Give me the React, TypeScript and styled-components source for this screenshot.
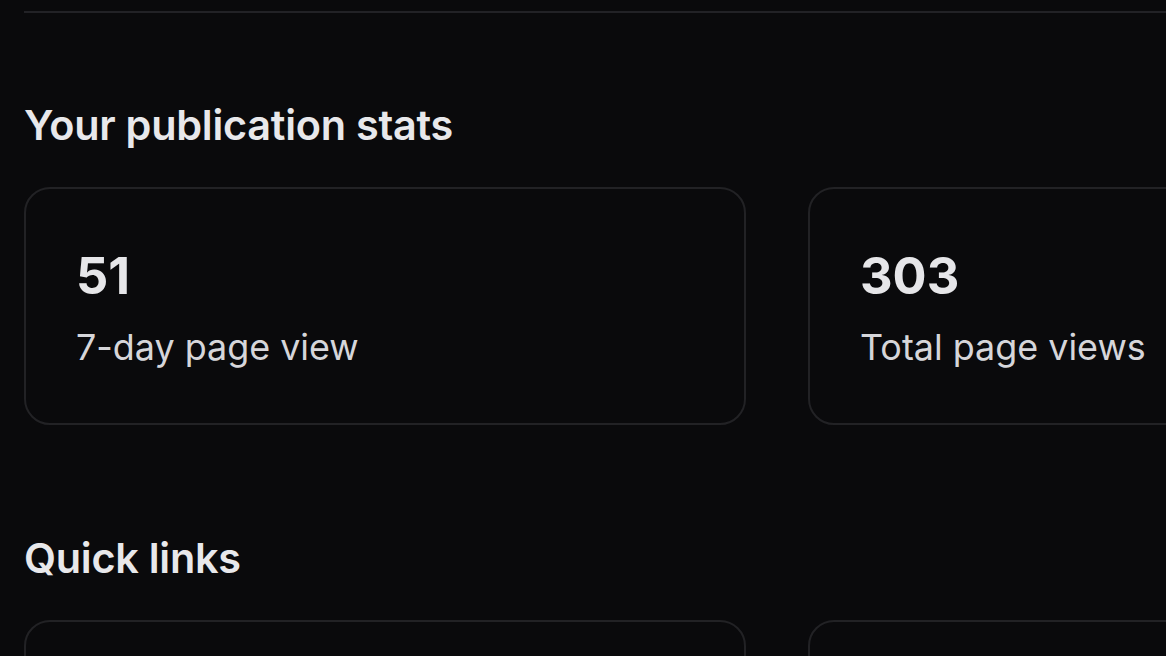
import styled, { createGlobalStyle } from 'styled-components'

const Global = createGlobalStyle`
  html, body {
    margin: 0;
    padding: 0;
    background: #0a0a0c;
  }
  body {
    font-family: Inter, "Noto Sans", sans-serif;
    color: #e7e7ea;
    overflow: hidden;
  }
`

const stats = [
  { value: '51', label: '7-day page view' },
  { value: '303', label: 'Total page views' },
]

export default function App() {
  return (
    <>
      <Global />
      <Page>
        <Divider />
        <Section>
          <Heading>Your publication stats</Heading>
          <CardGrid>
            {stats.map((s) => (
              <StatCard key={s.label}>
                <Value>{s.value}</Value>
                <Label>{s.label}</Label>
              </StatCard>
            ))}
          </CardGrid>
        </Section>
        <Section>
          <Heading>Quick links</Heading>
          <CardGrid>
            <LinkCard />
            <LinkCard />
          </CardGrid>
        </Section>
      </Page>
    </>
  )
}

const Page = styled.main`
  padding: 11px 0 0 24px;
  width: 1600px;
  height: 656px;
  box-sizing: border-box;
`

const Divider = styled.hr`
  margin: 0 0 88px;
  border: none;
  height: 2px;
  background: #222226;
`

const Section = styled.section`
  display: flex;
  flex-direction: column;
  gap: 38px;
  margin-bottom: 109px;
`

const Heading = styled.h2`
  margin: 0;
  font-size: 41.4px;
  line-height: 48px;
  font-weight: 600;
  color: #e8e8eb;
  letter-spacing: -0.25px;
`

const CardGrid = styled.div`
  display: grid;
  grid-template-columns: 722px 722px;
  gap: 62px;
`

const StatCard = styled.div`
  box-sizing: border-box;
  height: 238px;
  border: 2px solid #222225;
  border-radius: 26px;
  padding: 57px 50px 0;
  display: flex;
  flex-direction: column;
  gap: 20px;
`

const LinkCard = styled.div`
  box-sizing: border-box;
  height: 238px;
  border: 2px solid #222225;
  border-radius: 26px;
`

const Value = styled.div`
  font-size: 50.5px;
  line-height: 60px;
  font-weight: 700;
  color: #e6e6e9;
`

const Label = styled.div`
  font-size: 35.9px;
  line-height: 42px;
  font-weight: 400;
  color: #d6d6da;
`
